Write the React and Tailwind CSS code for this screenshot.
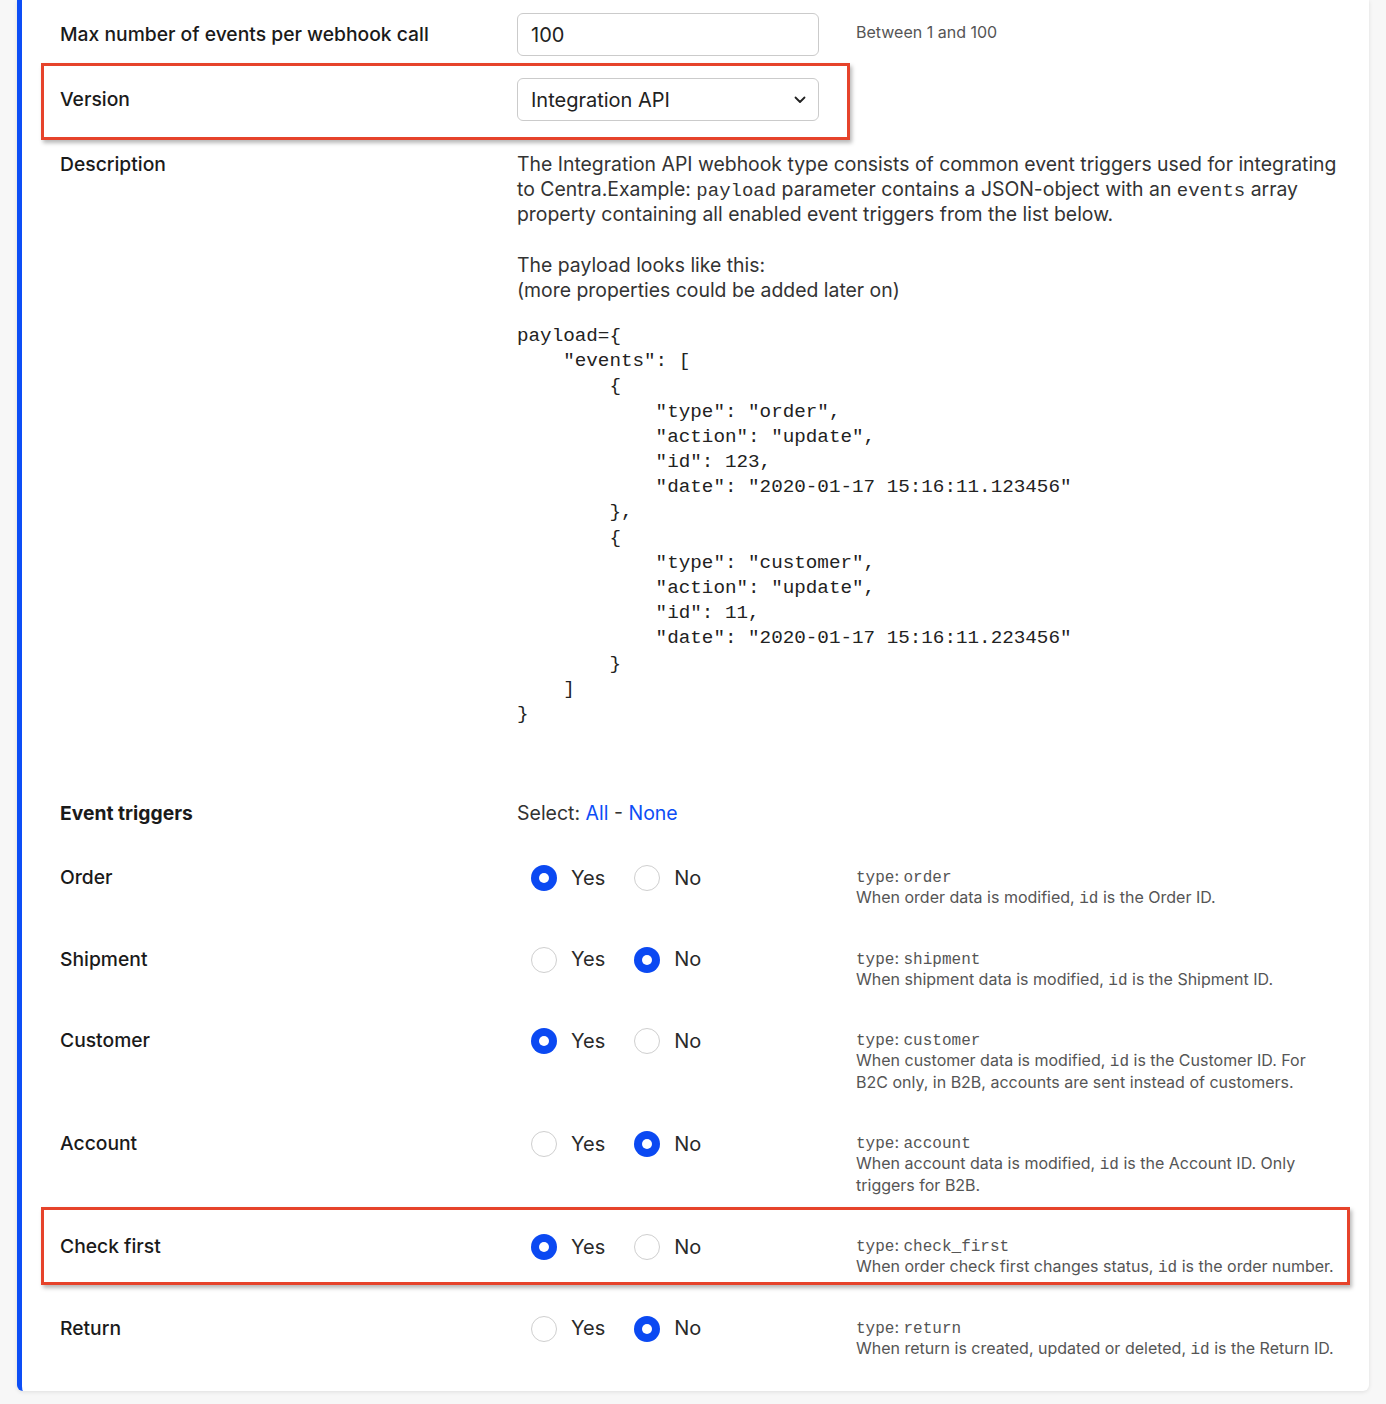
import React from "react";

const sans = { fontFamily: "Inter, 'Noto Sans', 'Liberation Sans', sans-serif" };

const code = `payload={
    "events": [
        {
            "type": "order",
            "action": "update",
            "id": 123,
            "date": "2020-01-17 15:16:11.123456"
        },
        {
            "type": "customer",
            "action": "update",
            "id": 11,
            "date": "2020-01-17 15:16:11.223456"
        }
    ]
}`;

function Mono({ children, className = "" }) {
  return (
    <code className={"font-['Liberation_Mono','DejaVu_Sans_Mono',monospace] leading-none " + className}>{children}</code>
  );
}

function Radio({ checked }) {
  return checked ? (
    <span className="flex h-[26px] w-[26px] shrink-0 items-center justify-center rounded-full bg-[#0b49f2]">
      <span className="h-[10px] w-[10px] rounded-full bg-white" />
    </span>
  ) : (
    <span className="h-[26px] w-[26px] shrink-0 rounded-full border border-[#cfcfcf] bg-white" />
  );
}

function Highlight({ className }) {
  return (
    <div
      className={
        "pointer-events-none absolute left-0 border-[3px] border-[#e6432b] shadow-[2px_3px_4px_rgba(0,0,0,0.28)] " +
        className
      }
    />
  );
}

function TriggerRow({ label, yes, type, children, highlight }) {
  return (
    <div className="relative mr-[19px] ml-[19px] grid grid-cols-[457px_339px_486px] items-start pt-[18px] pb-[20px] pl-[19px]">
      {highlight && <Highlight className="top-[-9px] h-[78px] w-[1309px]" />}
      <div className="text-[19.3px] leading-[25px] font-medium text-[#1a1a1a]">{label}</div>
      <div className="flex h-[26px] items-center pl-[14px] text-[20px] leading-[25px] text-[#2a2a2a]">
        <Radio checked={yes} />
        <span className="ml-[14px]">Yes</span>
        <span className="ml-[29px] flex items-center">
          <Radio checked={!yes} />
        </span>
        <span className="ml-[14px]">No</span>
      </div>
      <div className="text-[16px] text-[#555]">
        <div className="leading-[22px]">
          <Mono className="text-[16px] text-[#555]">type</Mono>: <Mono className="text-[16px] text-[#555]">{type}</Mono>
        </div>
        <div className="leading-[21.5px]">{children}</div>
      </div>
    </div>
  );
}

const Id = () => <Mono className="text-[16px] text-[#555]">id</Mono>;

export default function App() {
  return (
    <div style={sans} className="min-h-[1404px] bg-[#f7f7f7]">
      <div className="ml-[17px] w-[1352px] rounded-b-[6px] border-l-[5px] border-[#0d4ef6] bg-white pt-[2px] pb-[12px] shadow-[0_1px_4px_rgba(0,0,0,0.1)]">
        {/* Max number */}
        <div className="mr-[19px] ml-[19px] grid grid-cols-[457px_339px_1fr] items-center py-[11px] pl-[19px]">
          <div className="text-[19.3px] font-medium text-[#1a1a1a]">Max number of events per webhook call</div>
          <div className="flex h-[43px] w-[302px] items-center rounded-[6px] border border-[#cbcbcb] bg-white px-[13px] text-[20px] text-[#222]">
            100
          </div>
          <div className="-mt-[5px] text-[16px] text-[#555]">Between 1 and 100</div>
        </div>

        {/* Version */}
        <div className="relative mr-[19px] ml-[19px] grid grid-cols-[457px_339px_1fr] items-center py-[11px] pl-[19px]">
          <Highlight className="top-[-4px] h-[77px] w-[809px]" />
          <div className="text-[19.3px] font-medium text-[#1a1a1a]">Version</div>
          <div className="flex h-[43px] w-[302px] items-center justify-between rounded-[6px] border border-[#cbcbcb] bg-white pr-[12px] pl-[13px] text-[20px] text-[#222]">
            <span>Integration API</span>
            <svg width="12" height="8" viewBox="0 0 12 8" fill="none">
              <path d="M1.5 1.5 L6 6 L10.5 1.5" stroke="#222" strokeWidth="1.8" strokeLinecap="round" strokeLinejoin="round" />
            </svg>
          </div>
          <div />
        </div>

        {/* Description */}
        <div className="mr-[19px] ml-[19px] grid grid-cols-[457px_1fr] pt-[20px] pb-[56px] pl-[19px]">
          <div className="text-[19.3px] leading-[25px] font-medium text-[#1a1a1a]">Description</div>
          <div className="text-[19.4px] leading-[25px] text-[#333]">
            <p>
              The Integration API webhook type consists of common event triggers used for integrating to Centra.Example:{" "}
              <Mono className="text-[19px]">payload</Mono> parameter contains a JSON-object with an{" "}
              <Mono className="text-[19px]">events</Mono> array property containing all enabled event triggers from the
              list below.
            </p>
            <p className="mt-[26px]">
              The payload looks like this:
              <br />
              (more properties could be added later on)
            </p>
            <pre className="mt-[21px] font-['Liberation_Mono','DejaVu_Sans_Mono',monospace] text-[19.25px] leading-[25.2px] text-[#222]">
              {code}
            </pre>
          </div>
        </div>

        {/* Event triggers header */}
        <div className="mr-[19px] ml-[19px] grid grid-cols-[457px_1fr] pt-[18px] pb-[21px] pl-[19px]">
          <div className="text-[19.3px] leading-[25px] font-bold text-[#1a1a1a]">Event triggers</div>
          <div className="text-[19.5px] leading-[25px] text-[#333]">
            Select: <span className="text-[#0d4ef6]">All</span> - <span className="text-[#0d4ef6]">None</span>
          </div>
        </div>

        <TriggerRow label="Order" yes type="order">
          When order data is modified, <Id /> is the Order ID.
        </TriggerRow>
        <TriggerRow label="Shipment" yes={false} type="shipment">
          When shipment data is modified, <Id /> is the Shipment ID.
        </TriggerRow>
        <TriggerRow label="Customer" yes type="customer">
          When customer data is modified, <Id /> is the Customer ID. For B2C only, in B2B, accounts are sent instead of
          customers.
        </TriggerRow>
        <TriggerRow label="Account" yes={false} type="account">
          When account data is modified, <Id /> is the Account ID. Only triggers for B2B.
        </TriggerRow>
        <TriggerRow label="Check first" yes type="check_first" highlight>
          When order check first changes status, <Id /> is the order number.
        </TriggerRow>
        <TriggerRow label="Return" yes={false} type="return">
          When return is created, updated or deleted, <Id /> is the Return ID.
        </TriggerRow>
      </div>
    </div>
  );
}
